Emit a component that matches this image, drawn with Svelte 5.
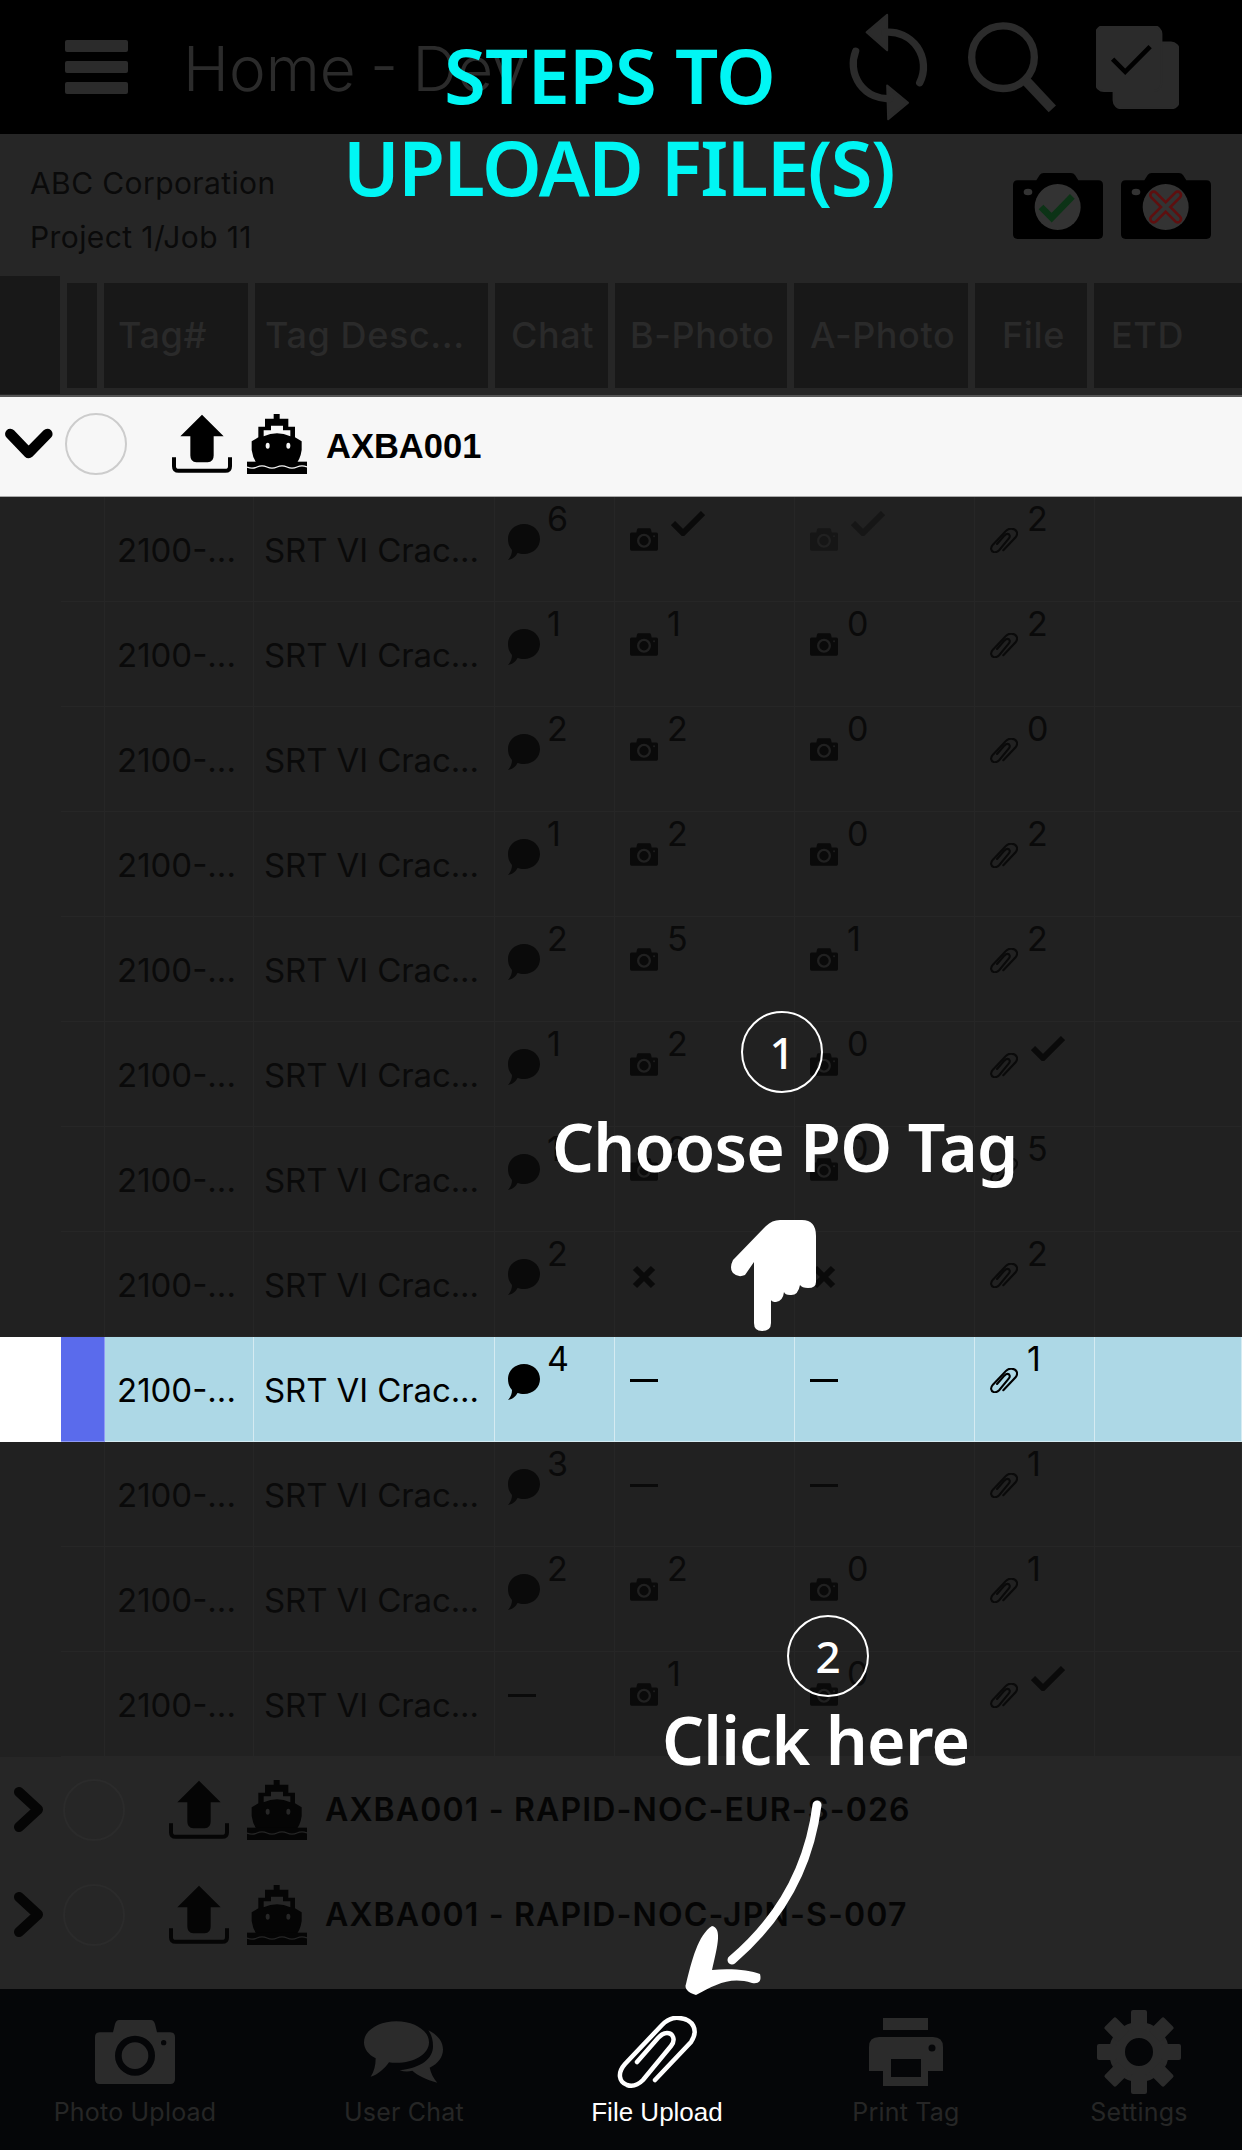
<script>
  const columns = [
    { label: "Tag#", pad: 14 },
    { label: "Tag Desc...", pad: 10 },
    { label: "Chat", pad: 16 },
    { label: "B-Photo", pad: 15 },
    { label: "A-Photo", pad: 16 },
    { label: "File", pad: 27 },
    { label: "ETD", pad: 17 }
  ];

  // null = no value, "check" / "x" / "dash" are the status marks
  const rows = [
    { chat: 6, b: "check", a: "check", file: 2, dimA: true },
    { chat: 1, b: 1, a: 0, file: 2 },
    { chat: 2, b: 2, a: 0, file: 0 },
    { chat: 1, b: 2, a: 0, file: 2 },
    { chat: 2, b: 5, a: 1, file: 2 },
    { chat: 1, b: 2, a: 0, file: "check" },
    { chat: 1, b: 2, a: 0, file: 5 },
    { chat: 2, b: "x", a: "x", file: 2 },
    { chat: 4, b: "dash", a: "dash", file: 1, selected: true },
    { chat: 3, b: "dash", a: "dash", file: 1 },
    { chat: 2, b: 2, a: 0, file: 1 },
    { chat: "dash", b: 1, a: 0, file: "check" }
  ];

  const tabs = [
    { label: "Photo Upload", icon: "cam" },
    { label: "User Chat", icon: "chats" },
    { label: "File Upload", icon: "clip", active: true },
    { label: "Print Tag", icon: "print" },
    { label: "Settings", icon: "gear" }
  ];

  const teeth = [0, 45, 90, 135, 180, 225, 270, 315];
</script>

{#snippet photo(val, dim)}
  <div class="cell metric photo" class:dim>
    {#if val === "dash"}
      <span class="dash"></span>
    {:else if val === "x"}
      <svg class="xmark" viewBox="0 0 24 24"><path d="M3 3 21 21M21 3 3 21" /></svg>
    {:else}
      <svg class="ico-cam"><use href="#cam" /></svg>
      {#if val === "check"}
        <svg class="tick" viewBox="0 0 34 26"><path d="M2 13 12 23 32 3" /></svg>
      {:else}
        <span class="num">{val}</span>
      {/if}
    {/if}
  </div>
{/snippet}

{#snippet groupRow(title, light)}
  <div class="group" class:light>
    {#if light}
      <svg class="chev-down" viewBox="15 95 148 98"><path d="M35 115 88 170 142 115" /></svg>
    {:else}
      <svg class="chev-right" viewBox="0 0 34 47"><path d="M7 6 26 23.5 7 41" /></svg>
    {/if}
    <span class="radio"></span>
    <svg class="upload" viewBox="513 68 180 175">
      <path class="solid" d="M603 68 668 132H638V190Q638 210 620 210H586Q568 210 568 190V132H538Z" />
      <path class="tray" d="M519 195V222Q519 236 533 236H673Q687 236 687 222V195" />
    </svg>
    <svg class="ship" viewBox="738 55 180 180">
      <path class="solid" d="M818 55h18v14h26v24h20v32l20 12v26q-4 30-22 48H774q-18-18-22-48v-26l20-12V93h20V69h26z" />
      <path class="cut" d="M788 122V104h22V90h36v14h22v18Q828 104 788 122z" />
      <ellipse class="cut" cx="800" cy="150" rx="6" ry="9" />
      <ellipse class="cut" cx="862" cy="150" rx="6" ry="9" />
      <rect class="solid" x="738" y="198" width="180" height="37" />
      <path class="wave" d="M738 214q15 7 30 0t30 0 30 0 30 0 30 0 30 0" />
    </svg>
    <span class="group-title">{title}</span>
  </div>
{/snippet}

<svg class="defs" width="0" height="0">
  <symbol id="cam" viewBox="110 60 240 192">
    <path fill-rule="evenodd" d="M182 60H278Q286 60 290 72L296 97H336Q350 97 350 111V238Q350 252 336 252H124Q110 252 110 238V111Q110 97 124 97H164L170 72Q174 60 182 60ZM230 107A60 60 0 1 0 230 227 60 60 0 1 0 230 107ZM230 127A40 40 0 1 1 230 207 40 40 0 1 1 230 127ZM316 120A8 8 0 1 0 316 136 8 8 0 1 0 316 120Z" />
  </symbol>
  <symbol id="bubble" viewBox="0 0 32 36">
    <path d="M16 0C25 0 32 6.500 32 15S25 30 16 30C13.500 30 11 29.500 9.500 29 8 32 5 35 0 36 3 33 4 29 4 26 1.500 23.500 0 19.500 0 15 0 6.500 7 0 16 0Z" />
  </symbol>
  <symbol id="clip" viewBox="0 0 80 72">
    <path d="M38 64 74 26C82 14 76 3 62 2 55 1 50 4 45 9L8 48C0 57 2 66 10 69 16 71 21 69 26 64L54 30C59 24 56 17 50 17 46 17 44 19 41 22L20 46" />
  </symbol>
</svg>

<div class="page">
  <header class="topbar">
    <svg class="burger" viewBox="0 0 63 54">
      <rect width="63" height="12" rx="2" /><rect y="21" width="63" height="12" rx="2" /><rect y="42" width="63" height="12" rx="2" />
    </svg>
    <h1 class="title">Home - Dev</h1>
    <div class="top-actions">
      <svg class="refresh" viewBox="20 10 250 325">
        <path d="M147 15 85 68 147 122Z" class="fillpath" />
        <path d="M147 228 210 280 150 330Z" class="fillpath" />
        <path class="arc" d="M140 68A105 105 0 0 1 245 220M155 268A105 105 0 0 1 52 125" />
      </svg>
      <svg class="search" viewBox="385 35 270 275">
        <circle class="arc" cx="490" cy="143" r="94" />
        <path d="M558 213 638 298" class="handle" />
      </svg>
      <svg class="docs" viewBox="762 50 250 250">
        <rect class="fillpath" x="815" y="100" width="197" height="198" rx="24" />
        <rect class="fillpath" x="762" y="50" width="197" height="196" rx="24" />
        <path class="docs-tick" d="M812 150 850 188 925 112" />
      </svg>
    </div>
  </header>

  <section class="subheader">
    <div class="sub-lines">
      <div>ABC Corporation</div>
      <div>Project 1/Job 11</div>
    </div>
    <div class="sub-cams">
      <svg viewBox="520 490 270 198">
        <path d="M534 512H590L600 496Q604 490 612 490H694Q702 490 706 496L716 512H776Q790 512 790 526V674Q790 688 776 688H534Q520 688 520 674V526Q520 512 534 512Z" />
        <ellipse class="dot" cx="565" cy="547" rx="13" ry="10" />
        <circle class="lens" cx="654" cy="592" r="69" />
        <path class="ok" d="M604 592 636 624 698 560" />
      </svg>
      <svg viewBox="844 490 270 198">
        <path d="M858 512H914L924 496Q928 490 936 490H1018Q1026 490 1030 496L1040 512H1100Q1114 512 1114 526V674Q1114 688 1100 688H858Q844 688 844 674V526Q844 512 858 512Z" />
        <ellipse class="dot" cx="889" cy="547" rx="13" ry="10" />
        <circle class="lens" cx="978" cy="592" r="69" />
        <path class="bad" d="M942 556 1014 628M1014 556 942 628" />
        <path class="bad-in" d="M942 556 1014 628M1014 556 942 628" />
      </svg>
    </div>
  </section>

  <div class="thead">
    <div class="th th-first"></div>
    <div class="th"></div>
    {#each columns as col}
      <div class="th" style="padding-left: {col.pad}px">{col.label}</div>
    {/each}
  </div>

  {@render groupRow("AXBA001", true)}

  <div class="tbody">
    {#each rows as row}
      <div class="row" class:selected={row.selected}>
        <div class="cell c-first"></div>
        <div class="cell c-mark"></div>
        <div class="cell text c-tag">2100-...</div>
        <div class="cell text c-desc">SRT VI Crac...</div>
        <div class="cell metric chat">
          {#if row.chat === "dash"}
            <span class="dash"></span>
          {:else}
            <svg class="ico-bubble"><use href="#bubble" /></svg>
            <span class="num">{row.chat}</span>
          {/if}
        </div>
        {@render photo(row.b, false)}
        {@render photo(row.a, row.dimA)}
        <div class="cell metric file">
          <svg class="ico-clip"><use href="#clip" /></svg>
          {#if row.file === "check"}
            <svg class="tick" viewBox="0 0 34 26"><path d="M2 13 12 23 32 3" /></svg>
          {:else}
            <span class="num">{row.file}</span>
          {/if}
        </div>
        <div class="cell"></div>
      </div>
    {/each}
  </div>

  <div class="groups">
    {@render groupRow("AXBA001 - RAPID-NOC-EUR-S-026", false)}
    {@render groupRow("AXBA001 - RAPID-NOC-JPN-S-007", false)}
  </div>

  <nav class="tabbar">
    {#each tabs as tab}
      <div class="tab" class:active={tab.active}>
        <div class="tab-icon">
          {#if tab.icon === "cam"}
            <svg class="t-cam"><use href="#cam" /></svg>
          {:else if tab.icon === "chats"}
            <svg class="t-chats" viewBox="915 65 240 185">
              <path d="M1012 65C1066 65 1110 93 1110 128S1066 190 1012 190C1004 190 996 189 990 188 976 208 958 224 935 232 945 216 950 198 950 176 928 165 915 148 915 128 915 93 958 65 1012 65Z" />
              <path d="M1108 92C1136 106 1152 126 1152 150 1152 172 1138 192 1112 205 1116 222 1124 238 1135 250 1100 240 1076 228 1060 214 1046 217 1034 216 1022 212 1088 205 1122 176 1122 140 1122 122 1118 106 1108 92Z" />
            </svg>
          {:else if tab.icon === "clip"}
            <svg class="t-clip"><use href="#clip" /></svg>
          {:else if tab.icon === "print"}
            <svg class="t-print" viewBox="870 2018 74 68">
              <rect x="884" y="2018" width="45" height="12" />
              <path fill-rule="evenodd" d="M880 2037H934Q944 2037 944 2047V2071H929V2086H884V2071H870V2047Q870 2037 880 2037ZM892 2059V2077H922V2059ZM933 2044.500A3.500 3.500 0 1 0 933 2051.500 3.500 3.500 0 1 0 933 2044.500Z" />
            </svg>
          {:else}
            <svg class="t-gear" viewBox="-42 -42 84 84">
              <circle class="gear-ring" r="22" />
              {#each teeth as deg}
                <rect x="-8" y="-42" width="16" height="20" rx="2" style="transform: rotate({deg}deg)" />
              {/each}
            </svg>
          {/if}
        </div>
        <div class="tab-label">{tab.label}</div>
      </div>
    {/each}
  </nav>

  <!-- tutorial overlay -->
  <div class="tip-title steps">STEPS TO</div>
  <div class="tip-title files">UPLOAD FILE(S)</div>

  <div class="step-no one">1</div>
  <div class="tip-text choose">Choose PO Tag</div>
  <svg class="hand" viewBox="730 1220 86 111">
    <path d="M780 1220H802Q816 1220 816 1236V1282Q816 1288 808 1288 802 1288 800 1285 798 1296 790 1295 785 1295 784 1292 783 1301 776 1302 772 1302 771 1300V1323Q771 1331 762 1331 754 1331 754 1323V1262L745 1275Q738 1278 733 1273 729 1268 733 1260L766 1226Q772 1220 780 1220Z" />
  </svg>

  <div class="step-no two">2</div>
  <div class="tip-text click">Click here</div>
  <svg class="arrow" viewBox="680 1800 145 200">
    <path class="shaft" d="M817 1805C810 1860 785 1915 732 1960" />
    <path class="head" d="M712 1926C722 1928 718 1945 712 1970 730 1968 750 1970 760 1974 762 1982 758 1984 752 1983 730 1976 715 1985 696 1995 688 1993 684 1988 686 1984 692 1960 698 1935 712 1926Z" />
  </svg>
</div>

<style>
  :global(body) {
    margin: 0;
    background: #262626;
  }
  .defs {
    position: absolute;
  }
  .page {
    position: relative;
    width: 1242px;
    height: 2150px;
    overflow: hidden;
    display: flex;
    flex-direction: column;
    background: #262626;
    font-family: Inter, "Liberation Sans", sans-serif;
    color: #0a0a0a;
  }

  /* top bar */
  .topbar {
    height: 134px;
    flex: none;
    background: #000;
    display: flex;
    align-items: center;
    padding-left: 65px;
    color: #2b2b2b;
    box-sizing: border-box;
  }
  .burger {
    width: 63px;
    height: 54px;
    fill: #2b2b2b;
  }
  .title {
    margin: 2px 0 0 55px;
    font-size: 62px;
    font-weight: 300;
    word-spacing: -3px;
    color: #2b2b2b;
    white-space: nowrap;
  }
  .top-actions {
    margin-left: auto;
    display: flex;
    align-items: center;
    margin-right: 63px;
  }
  .refresh {
    width: 83px;
    height: 108px;
    margin-right: 40px;
  }
  .search {
    width: 90px;
    height: 92px;
    margin-right: 38px;
  }
  .docs {
    width: 83px;
    height: 83px;
  }
  .fillpath {
    fill: #2b2b2b;
    stroke: #2b2b2b;
    stroke-linejoin: round;
    stroke-width: 6;
  }
  .arc {
    fill: none;
    stroke: #2b2b2b;
    stroke-width: 22;
    stroke-linecap: round;
  }
  .handle {
    stroke: #2b2b2b;
    stroke-width: 30;
  }
  .docs-tick {
    fill: none;
    stroke: #000;
    stroke-width: 14;
  }

  /* sub header */
  .subheader {
    height: 141px;
    flex: none;
    display: flex;
    justify-content: space-between;
    box-sizing: border-box;
    padding: 22px 31px 0 30px;
  }
  .sub-lines {
    font-size: 30px;
    line-height: 54px;
    letter-spacing: 0.4px;
    color: #0a0a0a;
  }
  .sub-cams {
    display: flex;
    gap: 18px;
    padding-top: 17px;
  }
  .sub-cams svg {
    width: 90px;
    height: 66px;
  }
  .dot,
  .lens {
    fill: #333;
  }
  .ok {
    fill: none;
    stroke: #0c3316;
    stroke-width: 20;
  }
  .bad {
    fill: none;
    stroke: #5e0f0f;
    stroke-width: 28;
    stroke-linecap: round;
  }
  .bad-in {
    fill: none;
    stroke: #333;
    stroke-width: 12;
    stroke-linecap: round;
  }

  /* table head */
  .thead {
    height: 120px;
    flex: none;
    display: grid;
    grid-template-columns: 60px 30px 144px 233px 113px 172px 174px 112px 148px;
    gap: 7px;
    align-items: center;
    border-bottom: 2px solid #555;
  }
  .th {
    height: 105px;
    box-sizing: border-box;
    background: #181818;
    color: #2a2a2a;
    font-size: 36px;
    font-weight: 500;
    letter-spacing: 0.6px;
    display: flex;
    align-items: center;
    white-space: nowrap;
  }
  .th-first {
    height: 118px;
  }

  /* group rows */
  .group {
    height: 105px;
    box-sizing: border-box;
    display: flex;
    align-items: center;
    --cut: #262626;
    color: #050505;
    padding-left: 12px;
  }
  .group.light {
    height: 100px;
    background: #f7f7f7;
    border-bottom: 1px solid #aaa;
    --cut: #f7f7f7;
    color: #000;
    padding: 0 0 5px 3px;
  }
  .chev-down {
    width: 52px;
    height: 34px;
  }
  .chev-right {
    width: 34px;
    height: 47px;
  }
  .chev-down path,
  .chev-right path {
    fill: none;
    stroke: currentColor;
    stroke-linecap: round;
    stroke-linejoin: round;
  }
  .chev-down path {
    stroke-width: 30;
  }
  .chev-right path {
    stroke-width: 10;
  }
  .radio {
    width: 62px;
    height: 62px;
    box-sizing: border-box;
    border-radius: 50%;
    border: 2px solid #2b2b2b;
    margin-left: 17px;
    flex: none;
  }
  .light .radio {
    border-color: #ccc;
    margin-left: 10px;
  }
  .upload {
    width: 60px;
    height: 60px;
    margin-left: 44px;
  }
  .light .upload {
    margin-left: 45px;
  }
  .ship {
    width: 60px;
    height: 60px;
    margin-left: 18px;
  }
  .light .ship {
    margin-left: 15px;
  }
  .solid {
    fill: currentColor;
  }
  .tray {
    fill: none;
    stroke: currentColor;
    stroke-width: 12;
  }
  .cut {
    fill: var(--cut);
  }
  .wave {
    fill: none;
    stroke: var(--cut);
    stroke-width: 4;
  }
  .group-title {
    margin-left: 18px;
    font-size: 32px;
    font-weight: 600;
    letter-spacing: 1.15px;
    white-space: nowrap;
  }
  .light .group-title {
    margin-left: 19px;
    font-family: "Liberation Sans", sans-serif;
    font-size: 34.5px;
    font-weight: 700;
    letter-spacing: 0;
    padding-top: 4px;
  }

  /* table body */
  .row {
    height: 105px;
    display: grid;
    grid-template-columns: 61px 44px 149px 241px 120px 180px 180px 120px 147px;
    background: #212121;
  }
  .cell {
    border-right: 1px solid #262626;
    border-bottom: 1px solid #262626;
    box-sizing: border-box;
  }
  .c-first {
    border: 0;
  }
  .row.selected {
    background: #add8e6;
  }
  .selected .cell {
    border-color: #d5ebf2;
    color: #000;
  }
  .selected .c-first {
    background: #fff;
  }
  .selected .c-mark {
    background: #5a6bec;
    border-color: #8f9af5;
  }
  .text {
    display: flex;
    align-items: center;
    padding-top: 2px;
    font-size: 33px;
    white-space: nowrap;
    overflow: hidden;
    color: #0a0a0a;
  }
  .c-tag {
    padding-left: 12px;
  }
  .c-desc {
    padding-left: 10px;
    letter-spacing: -0.1px;
  }
  .metric {
    display: flex;
    align-items: flex-start;
    padding-left: 15px;
    color: #0a0a0a;
  }
  .metric.chat {
    padding-left: 13px;
  }
  .metric.chat .num {
    margin-left: 7px;
  }
  .metric.dim {
    color: #161616;
  }
  .ico-bubble {
    width: 32px;
    height: 36px;
    margin-top: 27px;
    fill: currentColor;
  }
  .ico-cam {
    width: 28px;
    height: 25px;
    margin-top: 30px;
    fill: currentColor;
  }
  .ico-clip {
    width: 28px;
    height: 25px;
    margin-top: 31px;
    fill: none;
    stroke: currentColor;
    stroke-width: 6;
    stroke-linecap: round;
  }
  .t-clip {
    width: 80px;
    height: 72px;
    fill: none;
    stroke: #fff;
    stroke-width: 4.5;
    stroke-linecap: round;
  }
  .num {
    font-size: 34px;
    line-height: 34px;
    margin: 5px 0 0 9px;
  }
  .tick {
    width: 34px;
    height: 26px;
    margin: 13px 0 0 13px;
    fill: none;
    stroke: currentColor;
    stroke-width: 6;
  }
  .xmark {
    width: 24px;
    height: 24px;
    margin-top: 33px;
    margin-left: 2px;
    fill: none;
    stroke: currentColor;
    stroke-width: 6;
  }
  .dash {
    width: 28px;
    height: 3px;
    margin-top: 42px;
    background: currentColor;
  }
  .groups {
    height: 232px;
    flex: none;
  }

  /* tab bar */
  .tabbar {
    height: 161px;
    flex: none;
    background: #050608;
    display: grid;
    grid-template-columns: 270px 268px 238px 260px 206px;
    color: #2b2b2b;
  }
  .tab {
    display: flex;
    flex-direction: column;
    align-items: center;
    padding-top: 21px;
  }
  .tab-icon {
    height: 84px;
    display: flex;
    align-items: center;
    justify-content: center;
    fill: #2b2b2b;
  }
  .tab-label {
    margin-top: 3px;
    font-size: 25px;
    line-height: 30px;
    letter-spacing: 0.2px;
    color: #262626;
  }
  .tab.active .tab-label {
    color: #fff;
    letter-spacing: 0;
    font-family: "Liberation Sans", sans-serif;
    font-size: 26px;
  }
  .t-cam {
    width: 80px;
    height: 64px;
  }
  .t-chats {
    width: 80px;
    height: 64px;
  }
  .t-print {
    width: 74px;
    height: 68px;
  }
  .t-gear {
    width: 84px;
    height: 84px;
  }
  .gear-ring {
    fill: none;
    stroke: #2b2b2b;
    stroke-width: 16;
  }

  /* overlay */
  .tip-title,
  .tip-text,
  .step-no {
    position: absolute;
    font-family: "Noto Sans", sans-serif;
    white-space: nowrap;
  }
  .tip-title {
    color: #00f6f4;
    font-size: 76px;
    font-weight: 600;
    letter-spacing: -1.5px;
    line-height: 90px;
  }
  .steps {
    left: 444px;
    top: 30px;
    letter-spacing: -0.8px;
  }
  .files {
    left: 343px;
    top: 122px;
  }
  .tip-text {
    color: #fff;
    font-size: 66px;
    font-weight: 600;
    letter-spacing: -0.8px;
    line-height: 80px;
  }
  .choose {
    left: 552px;
    top: 1106px;
  }
  .click {
    left: 662px;
    top: 1699px;
  }
  .step-no {
    width: 82px;
    height: 82px;
    box-sizing: border-box;
    border: 2px solid #fff;
    border-radius: 50%;
    color: #fff;
    font-size: 44px;
    font-weight: 500;
    display: flex;
    align-items: center;
    justify-content: center;
  }
  .one {
    left: 741px;
    top: 1011px;
  }
  .two {
    left: 787px;
    top: 1615px;
  }
  .hand {
    position: absolute;
    left: 730px;
    top: 1220px;
    width: 86px;
    height: 111px;
    fill: #fff;
  }
  .arrow {
    position: absolute;
    left: 680px;
    top: 1800px;
    width: 145px;
    height: 200px;
  }
  .shaft {
    fill: none;
    stroke: #fff;
    stroke-width: 9;
    stroke-linecap: round;
  }
  .head {
    fill: #fff;
  }
</style>
